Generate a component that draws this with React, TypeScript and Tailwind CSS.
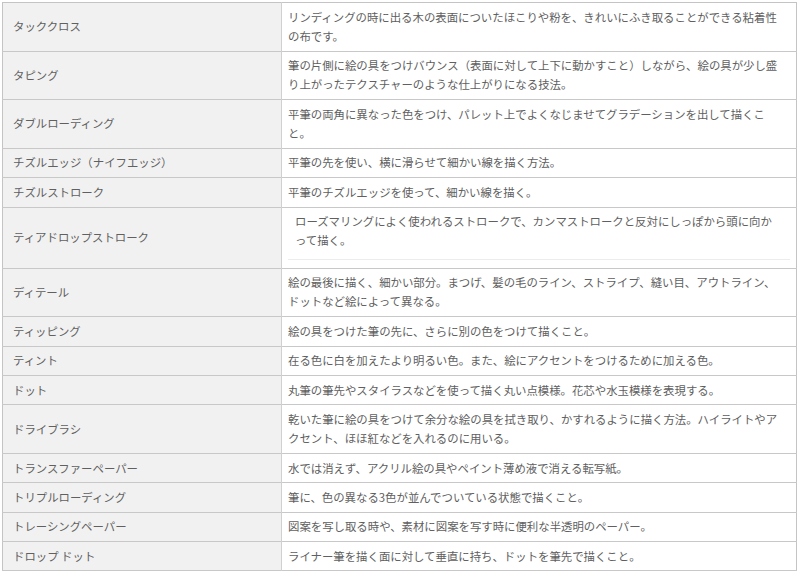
import React from "react";

type Row = { term: string; lines: string[]; special?: boolean };

const rows: Row[] = [
  { term: "タッククロス", lines: ["リンディングの時に出る木の表面についたほこりや粉を、きれいにふき取ることができる粘着性", "の布です。"] },
  { term: "タピング", lines: ["筆の片側に絵の具をつけバウンス（表面に対して上下に動かすこと）しながら、絵の具が少し盛", "り上がったテクスチャーのような仕上がりになる技法。"] },
  { term: "ダブルローディング", lines: ["平筆の両角に異なった色をつけ、パレット上でよくなじませてグラデーションを出して描くこ", "と。"] },
  { term: "チズルエッジ（ナイフエッジ）", lines: ["平筆の先を使い、横に滑らせて細かい線を描く方法。"] },
  { term: "チズルストローク", lines: ["平筆のチズルエッジを使って、細かい線を描く。"] },
  { term: "ティアドロップストローク", lines: ["ローズマリングによく使われるストロークで、カンマストロークと反対にしっぽから頭に向か", "って描く。"], special: true },
  { term: "ディテール", lines: ["絵の最後に描く、細かい部分。まつげ、髪の毛のライン、ストライプ、縫い目、アウトライン、", "ドットなど絵によって異なる。"] },
  { term: "ティッピング", lines: ["絵の具をつけた筆の先に、さらに別の色をつけて描くこと。"] },
  { term: "ティント", lines: ["在る色に白を加えたより明るい色。また、絵にアクセントをつけるために加える色。"] },
  { term: "ドット", lines: ["丸筆の筆先やスタイラスなどを使って描く丸い点模様。花芯や水玉模様を表現する。"] },
  { term: "ドライブラシ", lines: ["乾いた筆に絵の具をつけて余分な絵の具を拭き取り、かすれるように描く方法。ハイライトやア", "クセント、ほほ紅などを入れるのに用いる。"] },
  { term: "トランスファーペーパー", lines: ["水では消えず、アクリル絵の具やペイント薄め液で消える転写紙。"] },
  { term: "トリプルローディング", lines: ["筆に、色の異なる3色が並んでついている状態で描くこと。"] },
  { term: "トレーシングペーパー", lines: ["図案を写し取る時や、素材に図案を写す時に便利な半透明のペーパー。"] },
  { term: "ドロップ ドット", lines: ["ライナー筆を描く面に対して垂直に持ち、ドットを筆先で描くこと。"] },
];

export default function App() {
  return (
    <div
      className="w-[800px] h-[574px] bg-white pt-[2px] pl-[2px] overflow-hidden"
      style={{ fontFamily: '"Noto Sans CJK JP", "Noto Sans", sans-serif' }}
    >
      <table className="w-[795px] table-fixed border-collapse border border-[#c4c4c4] text-[11.4px] leading-[19.2px] text-[#606060]">
        <colgroup>
          <col className="w-[279px]" />
          <col />
        </colgroup>
        <tbody>
          {rows.map((r) => (
            <tr key={r.term} className="border-b border-[#c8c8c8]">
              <td className="bg-[#f1f1f1] border-r border-[#d0d0d0] pl-[10px] pr-[6px] py-[4.6px] align-middle whitespace-nowrap">
                {r.term}
              </td>
              <td className="pl-[6px] pr-[6px] py-[4.6px] align-top whitespace-nowrap">
                {r.special ? (
                  <div className="pl-[7px] pb-[8px] mb-[3.4px] border-b border-[#ececec]">
                    {r.lines.map((l, i) => (
                      <div key={i}>{l}</div>
                    ))}
                  </div>
                ) : (
                  r.lines.map((l, i) => <div key={i}>{l}</div>)
                )}
              </td>
            </tr>
          ))}
        </tbody>
      </table>
    </div>
  );
}
